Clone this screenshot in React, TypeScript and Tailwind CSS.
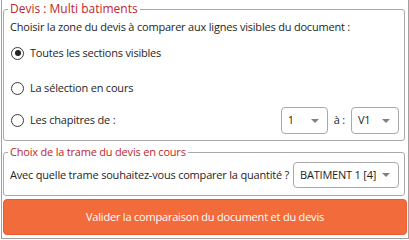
import { useState } from "react";

function Radio({ checked }: { checked: boolean }) {
  return (
    <span className="w-[13px] h-[13px] rounded-full border border-[#3a3a3a] bg-white flex items-center justify-center shrink-0">
      {checked && <span className="w-[6px] h-[6px] rounded-full bg-[#222]" />}
    </span>
  );
}

function Select({ value, width }: { value: string; width: string }) {
  return (
    <div
      className={`${width} h-full border border-[#a9a9a9] rounded-[4px] bg-white flex items-center justify-between pl-[6px] pr-[8px]`}
    >
      <span className="whitespace-nowrap">{value}</span>
      <svg width="8" height="4" viewBox="0 0 8 4">
        <path d="M0 0 L8 0 L4 4 Z" fill="#808080" />
      </svg>
    </div>
  );
}

export default function App() {
  const [choice, setChoice] = useState(0);
  const options = ["Toutes les sections visibles", "La sélection en cours"];

  return (
    <div
      className="w-[409px] h-[240px] bg-white text-[11px] tracking-[-0.2px] text-[#1e1e1e]"
      style={{ fontFamily: '"Open Sans", sans-serif' }}
    >
      <div className="ml-px w-[408px] h-[239px] border-l border-r border-b border-[#a0a0a0] pl-px pr-[3px] flex flex-col">
        <fieldset className="border border-[#a9a9a9] rounded-[3px] px-[6px] pb-[6px]">
          <legend className="ml-[-2px] px-[2px] leading-[18px] text-[12px] tracking-normal text-[#c0272d]">
            Devis : Multi batiments
          </legend>
          <p className="mt-[2px] leading-[14px] whitespace-nowrap">
            Choisir la zone du devis à comparer aux lignes visibles du document :
          </p>
          {options.map((label, i) => (
            <div
              key={label}
              onClick={() => setChoice(i)}
              className={`${i === 0 ? "mt-[9px]" : "mt-[15px]"} h-[20px] flex items-center gap-[6px] pl-px cursor-pointer`}
            >
              <Radio checked={choice === i} />
              <span>{label}</span>
            </div>
          ))}
          <div className="mt-[9px] h-[27px] flex items-center pl-px">
            <div onClick={() => setChoice(2)} className="flex items-center gap-[6px] cursor-pointer">
              <Radio checked={choice === 2} />
              <span>Les chapitres de :</span>
            </div>
            <div className="ml-auto h-full flex items-center mr-[-1px]">
              <Select value="1" width="w-[47px]" />
              <span className="mx-[6px]">à :</span>
              <Select value="V1" width="w-[48px]" />
            </div>
          </div>
        </fieldset>

        <fieldset className="mt-[2px] border border-[#a9a9a9] rounded-[3px] px-[6px] pb-[7px]">
          <legend className="ml-[-2px] px-[2px] leading-[18px] text-[11px] text-[#c0272d]">
            Choix de la trame du devis en cours
          </legend>
          <div className="mt-px h-[26px] flex items-center">
            <span className="whitespace-nowrap">Avec quelle trame souhaitez-vous comparer la quantité ?</span>
            <div className="ml-auto h-full mr-[-1px]">
              <Select value="BATIMENT 1 [4]" width="w-[106px]" />
            </div>
          </div>
        </fieldset>

        <button className="mt-[3px] mr-[-2px] h-[36px] rounded-[4px] bg-[#f26b3a] border border-[#ee5a36] text-white text-[11px] tracking-[-0.2px]">
          Valider la comparaison du document et du devis
        </button>
      </div>
    </div>
  );
}
